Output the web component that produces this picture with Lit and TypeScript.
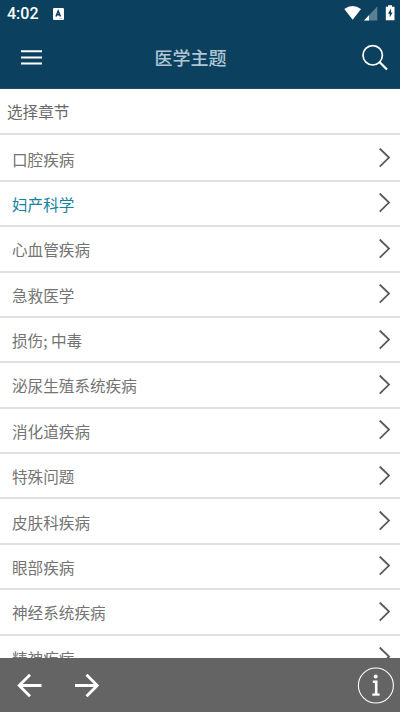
import { LitElement, html, css } from "lit";
import { customElement } from "lit/decorators.js";
import { classMap } from "lit/directives/class-map.js";

const CHAPTERS = [
  "口腔疾病", "妇产科学", "心血管疾病", "急救医学", "损伤; 中毒", "泌尿生殖系统疾病",
  "消化道疾病", "特殊问题", "皮肤科疾病", "眼部疾病", "神经系统疾病", "精神疾病",
];
const SELECTED = "妇产科学";

@customElement("app-root")
export class AppRoot extends LitElement {
  static styles = css`
    :host {
      display: flex;
      flex-direction: column;
      height: 712px;
      overflow: hidden;
      background: #fff;
      color: #747474;
      font-family: "Noto Sans CJK SC", sans-serif;
    }
    svg { display: block; fill: none; flex: none; }
    header {
      flex: none;
      height: 88px;
      background: #0b415f;
      border-bottom: 1px solid #2b4a66;
      color: #fff;
    }
    .status {
      display: flex;
      align-items: center;
      height: 27px;
      padding: 0 4px 0 7px;
    }
    .time { font: 500 16px/27px Roboto, sans-serif; width: 46px; }
    .grow { flex: 1; }
    .bar {
      display: grid;
      grid-template-columns: 60px 1fr 60px;
      align-items: center;
      height: 61px;
    }
    .title {
      text-align: center;
      padding: 0 19px 2px 0;
      font-size: 18px;
      font-weight: 500;
      line-height: 26px;
      color: #b0c6d4;
    }
    .heading {
      flex: none;
      box-sizing: border-box;
      height: 45.8px;
      border-bottom: 2px solid #e0e0e0;
      padding-left: 7px;
      font-size: 15.6px;
      line-height: 45px;
      color: #686868;
    }
    .list { flex: 1; min-height: 0; overflow: hidden; }
    .row {
      display: flex;
      align-items: center;
      justify-content: space-between;
      box-sizing: border-box;
      height: 45.38px;
      padding: 0 9px 0 12px;
      border-bottom: 2px solid #e0e0e0;
      font-size: 15.6px;
      line-height: 24px;
    }
    .row:first-child { height: 47px; padding-top: 1.6px; }
    .name { padding-top: 1px; }
    .row.selected .name { color: #1482a2; }
    footer {
      flex: none;
      display: flex;
      align-items: center;
      height: 54px;
      background: #646464;
      padding: 0 5px 0 17px;
    }
    .forward { margin-left: 32px; }
  `;

  render() {
    return html`
      <header>
        <div class="status">
          <span class="time">4:02</span>
          <svg width="11" height="12" viewBox="0 0 11 12">
            <rect width="11" height="12" rx="1.2" fill="#fff" />
            <path d="M3 8.5 5.2 3 7.5 8.5M3.8 6.8H6.8" stroke="#0b415f" stroke-width="1.5" />
            <path d="M6 10.4H9.5" stroke="#9db3bf" stroke-width=".7" />
          </svg>
          <span class="grow"></span>
          <svg width="52" height="18" viewBox="0 0 52 18">
            <path d="M0.300 4Q8.500-1.800 17 4L8.700 14.800Z" fill="#fff" />
            <path d="M33.300 1.500V15.500H20Z" fill="#5b7f94" />
            <path d="M25 10.200V15.500H20Z" fill="#fff" />
            <path d="M44 .3H48V1.800H50.500V15.300H41.800V1.800H44Z" fill="#fff" />
            <path d="M47 3.500 44 8.700H45.700V12.500L48.600 7.500H47Z" fill="#0b415f" />
          </svg>
        </div>
        <div class="bar">
          <svg width="60" height="61" viewBox="0 27 60 61">
            <path d="M21 51.200H42M21 57.500H42M21 63.500H42" stroke="#fff" stroke-width="2" />
          </svg>
          <div class="title">医学主题</div>
          <svg width="60" height="61" viewBox="340 27 60 61" stroke="#fff">
            <circle cx="372.700" cy="55.300" r="9.700" stroke-width="1.700" />
            <path d="M379.500 62 387 69.500" stroke-width="2.200" />
          </svg>
        </div>
      </header>
      <div class="heading">选择章节</div>
      <div class="list">
        ${CHAPTERS.map((name) => html`
          <div class=${classMap({ row: true, selected: name === SELECTED })}>
            <span class="name">${name}</span>
            <svg width="12" height="20" viewBox="0 0 12 20">
              <path d="M.7.500 10 9.600.7 18.700" stroke="#585858" stroke-width="1.800" />
            </svg>
          </div>`)}
      </div>
      <footer>
        <svg width="25" height="24" viewBox="0 0 25 24">
          <path d="M24.500 12.500H2M13 1.700 2.200 12.500 13 23.300" stroke="#fff" stroke-width="2.800" />
        </svg>
        <svg class="forward" width="25" height="24" viewBox="0 0 25 24">
          <path d="M1 12.500H23.500M12.500 1.700 23.300 12.500 12.500 23.300" stroke="#fff" stroke-width="2.800" />
        </svg>
        <span class="grow"></span>
        <svg width="38" height="38" viewBox="0 0 38 38">
          <circle cx="18.900" cy="19.500" r="17.500" stroke="#fff" stroke-width="1.100" />
          <circle cx="18.700" cy="10.600" r="2" fill="#fff" />
          <path d="M15.800 15.700H19.200V28.200" stroke="#fff" stroke-width="2.600" />
          <path d="M15.300 28.600H22.600" stroke="#fff" stroke-width="2.200" />
        </svg>
      </footer>
    `;
  }
}
